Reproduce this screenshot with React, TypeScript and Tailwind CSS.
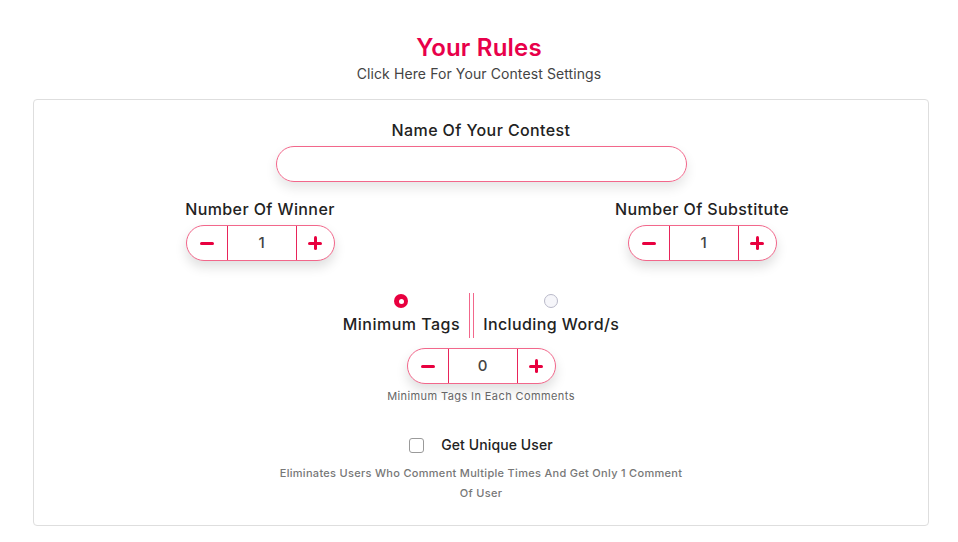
import React from "react";

const Stepper = ({ value }: { value: number }) => (
  <div className="flex h-[36px] w-[149px] items-stretch rounded-full border border-[#f2678b] bg-white shadow-[0_6px_12px_rgba(0,0,0,0.13)]">
    <button className="flex w-[40px] items-center justify-center">
      <span className="block h-[3px] w-[14px] rounded-sm bg-[#e8003f]" />
    </button>
    <div className="flex w-[70px] items-center justify-center border-x border-[#e8245a] text-[15px] font-medium text-[#444]">
      {value}
    </div>
    <button className="relative flex flex-1 items-center justify-center">
      <span className="absolute h-[3px] w-[14px] rounded-sm bg-[#e8003f]" />
      <span className="absolute h-[14px] w-[3px] rounded-sm bg-[#e8003f]" />
    </button>
  </div>
);

export default function App() {
  return (
    <div className="min-h-screen bg-white font-['Inter',sans-serif] text-[#222]">
      <div className="flex flex-col items-center pt-[32px]">
        <h1 className="text-[24px] font-semibold leading-[32px] tracking-[0.2px] text-[#e8004a]">Your Rules</h1>
        <p className="text-[14px] leading-[20px] tracking-[0.1px] text-[#444]">Click Here For Your Contest Settings</p>
      </div>

      <div className="ml-[33px] mt-[15px] flex w-[896px] flex-col items-center rounded border border-[#dedede] pb-[22px] pt-[19px]">
        <label className="text-[16px] font-medium leading-[22px] tracking-[0.4px]">Name Of Your Contest</label>
        <input className="mt-[5px] h-[36px] w-[411px] rounded-full border border-[#f2678b] px-4 shadow-[0_6px_12px_rgba(0,0,0,0.1)] outline-none" />

        <div className="mt-[16px] flex w-full justify-between px-[136px]">
          <div className="flex w-[180px] flex-col items-center">
            <span className="whitespace-nowrap text-[16px] font-medium leading-[22px] tracking-[0.4px]">Number Of Winner</span>
            <div className="mt-[5px]">
              <Stepper value={1} />
            </div>
          </div>
          <div className="flex w-[180px] flex-col items-center">
            <span className="whitespace-nowrap text-[16px] font-medium leading-[22px] tracking-[0.4px]">Number Of Substitute</span>
            <div className="mt-[5px]">
              <Stepper value={1} />
            </div>
          </div>
        </div>

        <div className="mt-[32px] flex items-stretch gap-[9px]">
          <div className="flex flex-col items-center pt-[1px]">
            <span className="flex h-[14px] w-[14px] items-center justify-center rounded-full bg-[#e8003f]">
              <span className="h-[5px] w-[5px] rounded-full bg-white" />
            </span>
            <span className="mt-[5px] text-[16px] font-medium leading-[22px] tracking-[0.5px]">Minimum Tags</span>
          </div>
          <div className="flex h-[45px] gap-[3px]">
            <span className="w-px bg-[#f2678b]" />
            <span className="w-px bg-[#f2678b]" />
          </div>
          <div className="flex flex-col items-center pt-[1px]">
            <span className="h-[14px] w-[14px] rounded-full border border-[#b9b9c9] bg-[#f6f6fa]" />
            <span className="mt-[5px] text-[16px] font-medium leading-[22px] tracking-[0.4px]">Including Word/s</span>
          </div>
        </div>

        <div className="mt-[10px]">
          <Stepper value={0} />
        </div>
        <p className="mt-[5px] text-[11px] leading-[14px] tracking-[0.4px] text-[#666]">Minimum Tags In Each Comments</p>

        <label className="mt-[31px] flex items-center gap-[17px]">
          <span className="h-[15px] w-[15px] rounded-[3px] border border-[#9a9a9a] bg-white" />
          <span className="text-[14px] font-medium leading-[22px] tracking-[0.1px]">Get Unique User</span>
        </label>

        <p className="mt-[7px] w-[412px] text-center text-[11px] font-medium leading-[20px] tracking-[0.3px] text-[#777]">
          Eliminates Users Who Comment Multiple Times And Get Only 1 Comment Of User
        </p>
      </div>
    </div>
  );
}
